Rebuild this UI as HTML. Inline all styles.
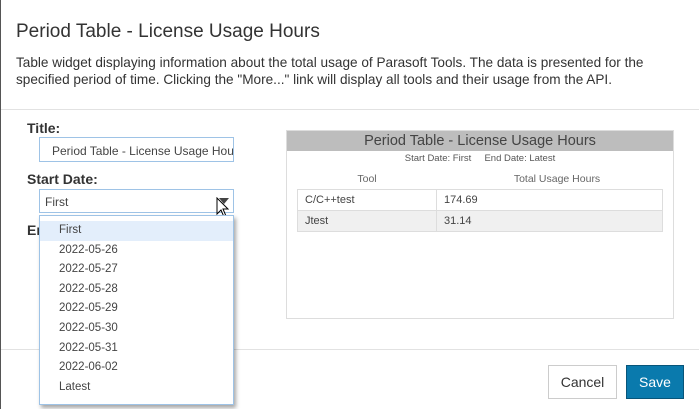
<!DOCTYPE html>
<html><head><meta charset="utf-8"><style>
*{margin:0;padding:0;box-sizing:border-box}
body{width:699px;height:409px;overflow:hidden;background:#fff;font-family:"Liberation Sans",Arial,sans-serif;color:#333;position:relative}
.a{position:absolute}
.lbl{font-weight:bold;font-size:14px;color:#333}
.inp{border:1px solid #9ec3e6;background:#fff;font-size:12px;color:#444}
.dd div{height:19.6px;line-height:19.6px;padding-left:19px;font-size:11.5px;color:#444}
td{font-size:11px;color:#444;padding-left:7px;border:1px solid #ddd;height:21px}
</style></head><body>
<div class="a" style="left:0;top:0;width:1px;height:409px;background:#555"></div>
<div class="a" style="left:16px;top:21px;font-size:19px;color:#333">Period Table - License Usage Hours</div>
<div class="a" style="left:16px;top:54px;font-size:13.6px;line-height:17px;color:#333;width:680px">Table widget displaying information about the total usage of Parasoft Tools. The data is presented for the specified period of time. Clicking the "More..." link will display all tools and their usage from the API.</div>
<div class="a" style="left:1px;top:109px;width:698px;height:1px;background:#e2e2e2"></div>
<div class="a lbl" style="left:27px;top:120px">Title:</div>
<div class="a inp" style="left:39px;top:137px;width:195px;height:25px;padding:6px 0 0 12px;white-space:nowrap;overflow:hidden;font-size:12px">Period Table - License Usage Hour</div>
<div class="a lbl" style="left:27px;top:171px">Start Date:</div>
<div class="a inp" style="left:39px;top:189px;width:195px;height:24px;padding:5px 0 0 5px">First</div>
<div class="a" style="left:219px;top:198px;width:0;height:0;border-left:5px solid transparent;border-right:5px solid transparent;border-top:6px solid #444"></div>
<svg class="a" style="left:216px;top:197px" width="16" height="24" viewBox="0 0 16 24"><path d="M1 1 L1 17 L5 13 L8 20 L10 19 L7 12 L12 12 Z" fill="#fff" stroke="#000" stroke-width="1"/></svg>
<div class="a lbl" style="left:27px;top:222px">En</div>
<div class="a" style="left:1px;top:349px;width:698px;height:1px;background:#e2e2e2"></div>
<div class="a dd" style="left:39px;top:215px;width:195px;height:190px;border:1px solid #9ec3e6;background:#fff;padding-top:5px;box-shadow:2px 3px 4px rgba(0,0,0,.35)">
<div style="background:#e3eefb">First</div><div>2022-05-26</div><div>2022-05-27</div><div>2022-05-28</div><div>2022-05-29</div><div>2022-05-30</div><div>2022-05-31</div><div>2022-06-02</div><div>Latest</div></div>
<div class="a" style="left:286px;top:130px;width:388px;height:189px;border:1px solid #ddd">
<div style="background:#bdbdbd;height:20px;text-align:center;font-size:14.5px;line-height:20px;color:#444">Period Table - License Usage Hours</div>
<div style="text-align:center;font-size:9.5px;color:#555;margin-top:2px">Start Date: First &nbsp;&nbsp;&nbsp;&nbsp;End Date: Latest</div>
<div style="position:absolute;left:0;top:42px;width:160px;text-align:center;font-size:10.5px;color:#666">Tool</div>
<div style="position:absolute;left:155px;top:42px;width:230px;text-align:center;font-size:10.5px;color:#666">Total Usage Hours</div>
<table style="position:absolute;left:10px;top:58px;width:366px;border-collapse:collapse">
<tr><td style="width:139px">C/C++test</td><td>174.69</td></tr>
<tr style="background:#f0f0f0"><td>Jtest</td><td>31.14</td></tr></table>
</div>
<div class="a" style="left:548px;top:365px;width:69px;height:34px;border:1px solid #ccc;text-align:center;line-height:32px;font-size:14px;color:#333">Cancel</div>
<div class="a" style="left:626px;top:365px;width:58px;height:34px;background:#0a7aad;border:1px solid #07557a;text-align:center;line-height:32px;font-size:14px;color:#fff">Save</div>
</body></html>
